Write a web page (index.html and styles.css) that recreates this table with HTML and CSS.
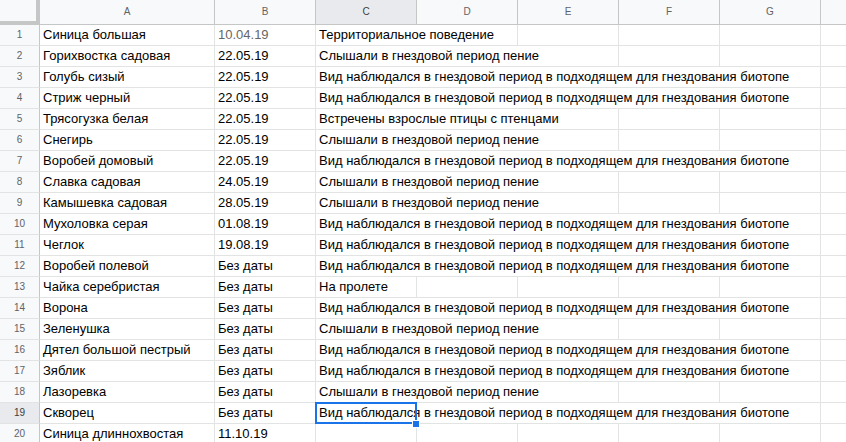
FILE: index.html
```html
<!DOCTYPE html>
<html lang="ru">
<head>
    <meta charset="UTF-8">
    <title>Птицы</title>
    <link rel="stylesheet" href="styles.css">
</head>
<body>
    <div class="sheet">
        <div class="corner"></div>
        <div class="ch">A</div><div class="ch">B</div><div class="ch on">C</div><div class="ch">D</div><div class="ch">E</div><div class="ch">F</div><div class="ch">G</div><div class="ch"></div>

        <div class="rh">1</div><div class="c">Синица большая</div><div class="c muted">10.04.19</div><div class="c s2">Территориальное поведение</div><div class="c"></div><div class="c"></div><div class="c"></div><div class="c"></div>
        <div class="rh">2</div><div class="c">Горихвостка садовая</div><div class="c">22.05.19</div><div class="c s3">Слышали в гнездовой период пение</div><div class="c"></div><div class="c"></div><div class="c"></div>
        <div class="rh">3</div><div class="c">Голубь сизый</div><div class="c">22.05.19</div><div class="c s5">Вид наблюдался в гнездовой период в подходящем для гнездования биотопе</div><div class="c"></div>
        <div class="rh">4</div><div class="c">Стриж черный</div><div class="c">22.05.19</div><div class="c s5">Вид наблюдался в гнездовой период в подходящем для гнездования биотопе</div><div class="c"></div>
        <div class="rh">5</div><div class="c">Трясогузка белая</div><div class="c">22.05.19</div><div class="c s3">Встречены взрослые птицы с птенцами</div><div class="c"></div><div class="c"></div><div class="c"></div>
        <div class="rh">6</div><div class="c">Снегирь</div><div class="c">22.05.19</div><div class="c s3">Слышали в гнездовой период пение</div><div class="c"></div><div class="c"></div><div class="c"></div>
        <div class="rh">7</div><div class="c">Воробей домовый</div><div class="c">22.05.19</div><div class="c s5">Вид наблюдался в гнездовой период в подходящем для гнездования биотопе</div><div class="c"></div>
        <div class="rh">8</div><div class="c">Славка садовая</div><div class="c">24.05.19</div><div class="c s3">Слышали в гнездовой период пение</div><div class="c"></div><div class="c"></div><div class="c"></div>
        <div class="rh">9</div><div class="c">Камышевка садовая</div><div class="c">28.05.19</div><div class="c s3">Слышали в гнездовой период пение</div><div class="c"></div><div class="c"></div><div class="c"></div>
        <div class="rh">10</div><div class="c">Мухоловка серая</div><div class="c">01.08.19</div><div class="c s5">Вид наблюдался в гнездовой период в подходящем для гнездования биотопе</div><div class="c"></div>
        <div class="rh">11</div><div class="c">Чеглок</div><div class="c">19.08.19</div><div class="c s5">Вид наблюдался в гнездовой период в подходящем для гнездования биотопе</div><div class="c"></div>
        <div class="rh">12</div><div class="c">Воробей полевой</div><div class="c">Без даты</div><div class="c s5">Вид наблюдался в гнездовой период в подходящем для гнездования биотопе</div><div class="c"></div>
        <div class="rh">13</div><div class="c">Чайка серебристая</div><div class="c">Без даты</div><div class="c">На пролете</div><div class="c"></div><div class="c"></div><div class="c"></div><div class="c"></div><div class="c"></div>
        <div class="rh">14</div><div class="c">Ворона</div><div class="c">Без даты</div><div class="c s5">Вид наблюдался в гнездовой период в подходящем для гнездования биотопе</div><div class="c"></div>
        <div class="rh">15</div><div class="c">Зеленушка</div><div class="c">Без даты</div><div class="c s3">Слышали в гнездовой период пение</div><div class="c"></div><div class="c"></div><div class="c"></div>
        <div class="rh">16</div><div class="c">Дятел большой пестрый</div><div class="c">Без даты</div><div class="c s5">Вид наблюдался в гнездовой период в подходящем для гнездования биотопе</div><div class="c"></div>
        <div class="rh">17</div><div class="c">Зяблик</div><div class="c">Без даты</div><div class="c s5">Вид наблюдался в гнездовой период в подходящем для гнездования биотопе</div><div class="c"></div>
        <div class="rh">18</div><div class="c">Лазоревка</div><div class="c">Без даты</div><div class="c s3">Слышали в гнездовой период пение</div><div class="c"></div><div class="c"></div><div class="c"></div>
        <div class="rh on">19</div><div class="c">Скворец</div><div class="c">Без даты</div><div class="c s5 sel">Вид наблюдался в гнездовой период в подходящем для гнездования биотопе<div class="box"><div class="handle"></div></div></div><div class="c"></div>
        <div class="rh">20</div><div class="c">Синица длиннохвостая</div><div class="c">11.10.19</div><div class="c"></div><div class="c"></div><div class="c"></div><div class="c"></div><div class="c"></div><div class="c"></div>
    </div>
</body>
</html>
```

FILE: styles.css
```css
*{
    box-sizing: border-box;
}
body{
    margin: 0;
    overflow: hidden;
    background: #fff;
    font-family: "Liberation Sans", Arial, sans-serif;
}

.sheet{
    display: grid;
    grid-template-columns: 40px 175px repeat(7, 101px);
    grid-template-rows: 25px;
    grid-auto-rows: 21px;
    width: 922px;
}

.corner{
    background: #f8f9fa;
    border-right: 4px solid #c4c7c5;
    border-bottom: 4px solid #c4c7c5;
}
.ch{
    background: #f8f9fa;
    border-right: 1px solid #c4c7c5;
    border-bottom: 1px solid #c4c7c5;
    font-size: 10px;
    color: #5f6368;
    text-align: center;
    line-height: 24px;
}
.rh{
    background: #f8f9fa;
    border-right: 1px solid #c4c7c5;
    border-bottom: 1px solid #e2e3e3;
    font-size: 10px;
    color: #5f6368;
    text-align: center;
    line-height: 20px;
}
.ch.on,.rh.on{
    background: #e8eaed;
    color: #3c4043;
}

.c{
    border-right: 1px solid #e2e3e3;
    border-bottom: 1px solid #e2e3e3;
    padding: 0 3px;
    font-size: 13px;
    line-height: 20px;
    color: #000;
    white-space: nowrap;
    overflow: hidden;
}
.muted{
    color: #666;
}
.s2{ grid-column: span 2; }
.s3{ grid-column: span 3; }
.s5{ grid-column: span 5; }

.sel{
    position: relative;
    overflow: visible;
}
.box{
    position: absolute;
    left: -1px;
    top: -1px;
    width: 102px;
    height: 22px;
    border: 2px solid #1a73e8;
}
.handle{
    position: absolute;
    left: 95px;
    top: 16px;
    width: 8px;
    height: 8px;
    background: #1a73e8;
    border: 1px solid #fff;
}
```
